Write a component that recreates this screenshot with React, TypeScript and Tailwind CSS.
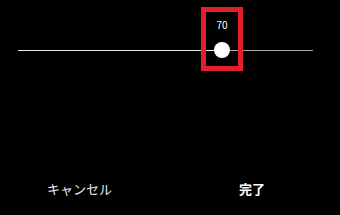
export default function App() {
  const value = 70;

  return (
    <div className="w-[340px] h-[215px] bg-black flex flex-col font-['Noto_Sans_CJK_JP',sans-serif] overflow-hidden">
      {/* Slider */}
      <div className="relative mt-[13px] ml-[18px] mr-[27px] h-[52px]">
        <div className="absolute left-0 right-0 top-[37px] h-px bg-[#a8a8a8]" />
        <div
          className="absolute left-0 top-[37px] h-px bg-[#ededed]"
          style={{ width: `${value}%` }}
        />
        <div
          className="absolute top-0 -translate-x-1/2 w-[30px] h-[52px] flex flex-col items-center"
          style={{ left: `${(value / 100) * 295 - 2.5}px` }}
        >
          <span className="text-[10px] leading-none text-white mt-[7px]">
            {value}
          </span>
          <div className="mt-[12px] w-[16px] h-[16px] rounded-full bg-white" />
          {/* highlight box */}
          <div className="absolute -inset-[6px] border-[5px] border-[#e2202b]" />
        </div>
      </div>

      {/* Buttons */}
      <div className="mt-auto mb-[20px] flex items-center text-[13px] leading-none">
        <button className="ml-[47px] text-[#ececec]">キャンセル</button>
        <button className="ml-auto mr-[75px] font-bold text-white">完了</button>
      </div>
    </div>
  );
}
